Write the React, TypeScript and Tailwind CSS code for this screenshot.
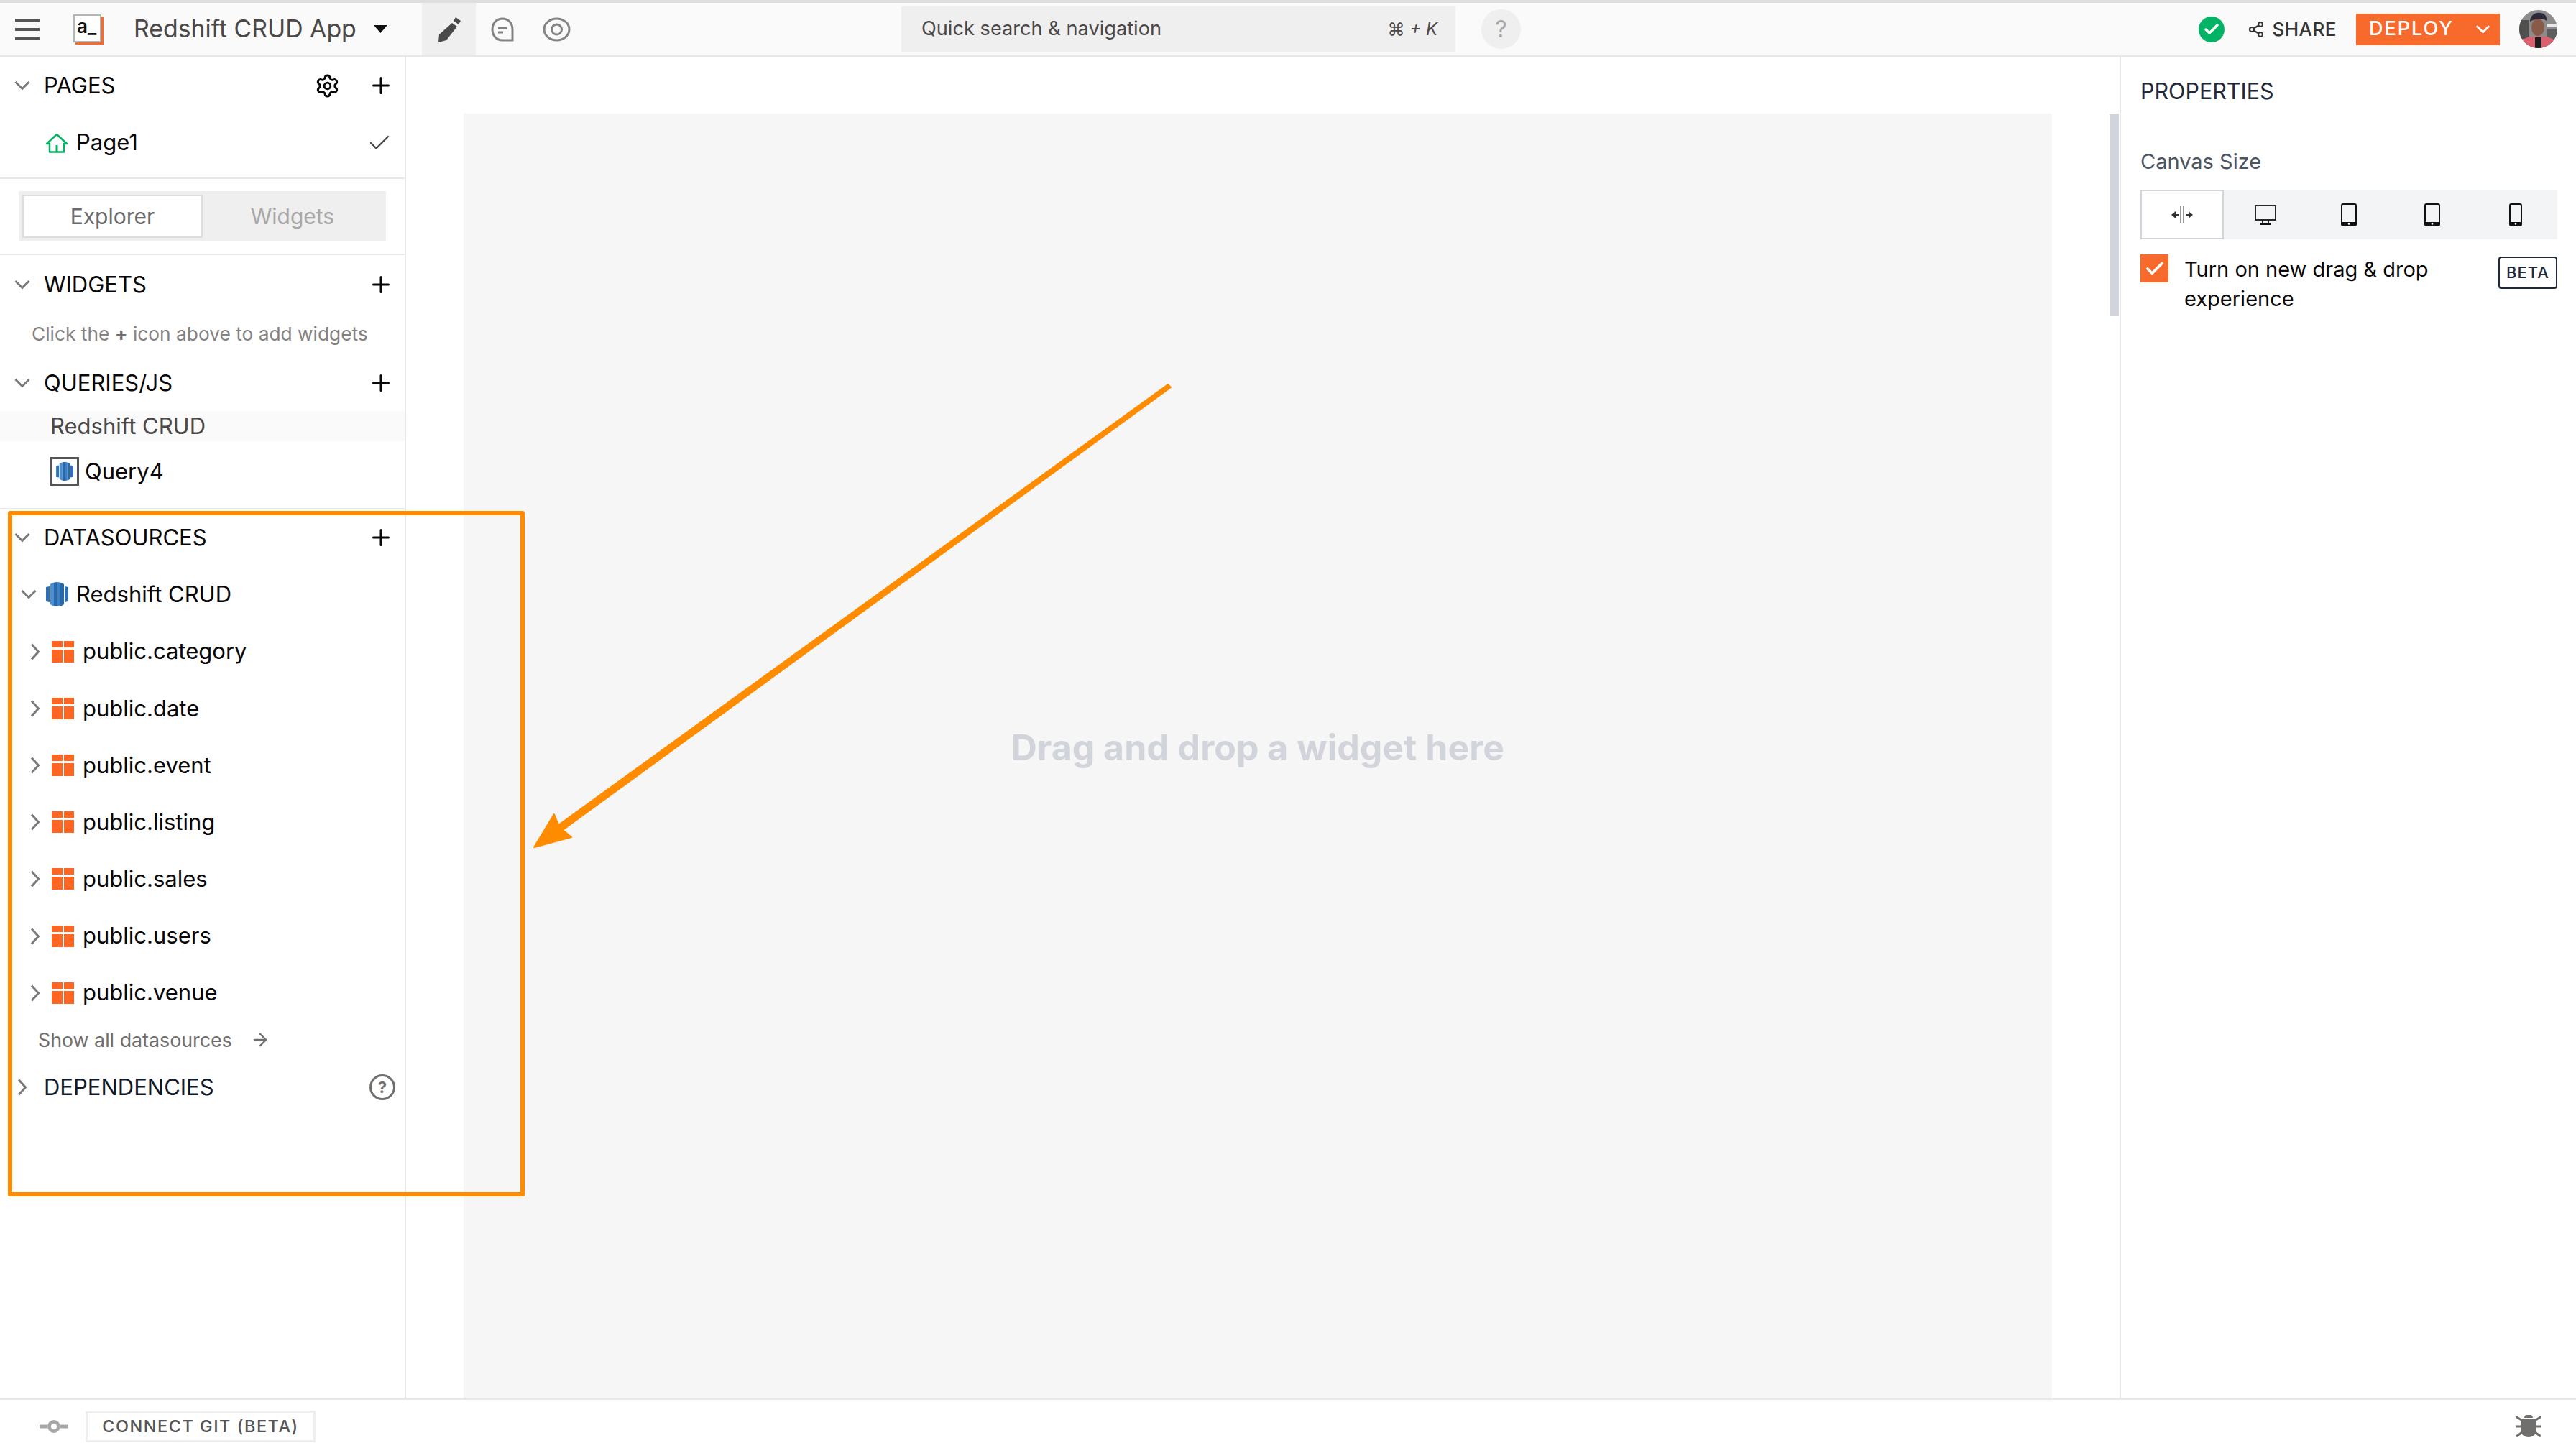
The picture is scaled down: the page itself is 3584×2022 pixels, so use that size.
import React from "react";
import { Check, Plus, Settings, ArrowRight, Share2 } from "lucide-react";

const tables = ["public.category", "public.date", "public.event", "public.listing", "public.sales", "public.users", "public.venue"];

function ChevronDown({ className }: { className?: string }) {
  return (
    <svg viewBox="0 0 22 14" className={className} fill="none" stroke="#7b7979" strokeWidth="3">
      <path d="M1.5 2 11 11.500 20.500 2" />
    </svg>
  );
}

function ChevronRight({ className }: { className?: string }) {
  return (
    <svg viewBox="0 0 14 24" className={className} fill="none" stroke="#7b7979" strokeWidth="3">
      <path d="M2 1.500 11.500 12 2 22.500" />
    </svg>
  );
}

function RedshiftIcon({ className }: { className?: string }) {
  return (
    <svg viewBox="0 0 31 34" className={className}>
      <path d="M0 7l5-1v22l-5-1z" fill="#2f6fb5" />
      <path d="M31 7l-5-1v22l5-1z" fill="#2f6fb5" />
      <path d="M6 3c1.500-1 3-2 5-2.300V33.300c-2-.3-3.500-1.300-5-2.300z" fill="#4a8fd0" />
      <path d="M11 .7C12.500.2 14 0 15.500 0v34c-1.500 0-3-.2-4.500-.7z" fill="#2a68ad" />
      <path d="M15.500 0C17 0 18.500.2 20 .7V33.300c-1.500.5-3 .7-4.500.7z" fill="#3d80c4" />
      <path d="M20 .7c2 .3 3.500 1.300 5 2.300V31c-1.500 1-3 2-5 2.300z" fill="#2a68ad" />
    </svg>
  );
}

function TableIcon() {
  return (
    <div className="grid grid-cols-2 grid-rows-[9px_18px] gap-x-[2px] gap-y-[3px] w-[31px] h-[30px] shrink-0">
      <div className="bg-[#ff6522]" />
      <div className="bg-[#ff6522]" />
      <div className="bg-[#ff6522]" />
      <div className="bg-[#ff6522]" />
    </div>
  );
}

function SectionRow({ title, className = "h-[78px]" }: { title: string; className?: string }) {
  return (
    <div className={`flex items-center shrink-0 ${className}`}>
      <div className="w-[61px] shrink-0 pl-[20px]">
        <ChevronDown className="w-[22px] h-[14px]" />
      </div>
      <span className="text-[31px] text-[#090707] flex-1">{title}</span>
      <Plus className="w-[36px] h-[36px] mr-[15px] text-[#090707]" strokeWidth={2} />
    </div>
  );
}

function Header() {
  return (
    <header className="h-[79px] shrink-0 flex items-stretch bg-[#fafafa] border-t-[4px] border-t-[#dedede] border-b-[2px] border-b-[#e8e8e8]">
      <div className="w-[587px] flex items-center shrink-0">
        <svg viewBox="0 0 34 30" className="w-[34px] h-[30px] ml-[21px]" fill="#555">
          <rect width="34" height="4" />
          <rect y="13" width="34" height="4" />
          <rect y="26" width="34" height="4" />
        </svg>
        <div className="w-[39px] h-[39px] ml-[47px] mb-[3px] bg-white border-[2px] border-[#b5b5b5] shadow-[3px_3px_0_#f86a2b] text-[26px] font-semibold leading-[30px] pl-[3px] text-[#111] overflow-hidden">a_</div>
        <span className="ml-[45px] text-[33.800px] text-[#4b4848]">Redshift CRUD App</span>
        <svg viewBox="0 0 19 11" className="w-[19px] h-[11px] ml-[24px]" fill="#111">
          <path d="M0 0h19L9.500 11z" />
        </svg>
      </div>
      <div className="w-[75px] bg-[#efefef] flex items-center justify-center shrink-0">
        <svg viewBox="0 0 36 36" className="w-[36px] h-[36px]" fill="#4b4848">
          <path d="M27 1l7 5-3 5-7-5zM22 9l7 5-15 19-11 3 1-11z" />
        </svg>
      </div>
      <div className="ml-[21px] flex items-center shrink-0">
        <svg viewBox="0 0 32 34" className="w-[32px] h-[34px]" fill="none" stroke="#858282" strokeWidth="3">
          <path d="M30 32H16C8 32 2 26 2 17S8 2 16 2s14 6 14 15z" />
          <path d="M10 15h12M10 21h7" />
        </svg>
      </div>
      <div className="ml-[40px] flex items-center shrink-0">
        <svg viewBox="0 0 39 34" className="w-[39px] h-[34px]" fill="none" stroke="#858282" strokeWidth="3">
          <ellipse cx="19.500" cy="17" rx="17.500" ry="15" />
          <circle cx="19.500" cy="17" r="7" />
        </svg>
      </div>
      <div className="ml-[460px] my-[5px] w-[771px] bg-[#efefef] flex items-center justify-between pl-[28px] pr-[25px] shrink-0">
        <span className="text-[27.200px] text-[#4b4848]">Quick search &amp; navigation</span>
        <span className="text-[24px] text-[#4b4848]">
          ⌘ <span className="italic">+ K</span>
        </span>
      </div>
      <div className="ml-[36px] flex items-center shrink-0">
        <div className="w-[55px] h-[55px] rounded-full bg-[#efefef] flex items-center justify-center text-[32px] text-[#a9a7a7]">?</div>
      </div>
      <div className="flex-1 flex items-center justify-end pr-[26px]">
        <div className="w-[36px] h-[36px] rounded-full bg-[#03b365] flex items-center justify-center">
          <Check className="w-[24px] h-[24px] text-white" strokeWidth={3.5} />
        </div>
        <Share2 className="ml-[32px] w-[24px] h-[24px] text-[#333]" strokeWidth={2.2} />
        <span className="ml-[10px] text-[26px] font-medium tracking-[0.5px] text-[#333]">SHARE</span>
        <div className="ml-[27px] w-[200px] h-[44px] bg-[#f86a2b] flex items-center pl-[18px] text-white">
          <span className="text-[27px] font-medium tracking-[2px]">DEPLOY</span>
          <svg viewBox="0 0 22 13" className="w-[21px] h-[13px] ml-auto mr-[13px]" fill="none" stroke="#fff" strokeWidth="3">
            <path d="M2 2l9 9 9-9" />
          </svg>
        </div>
        <svg viewBox="0 0 53 53" className="ml-[27px] w-[53px] h-[53px]">
          <defs>
            <clipPath id="avatarClip">
              <circle cx="26.500" cy="26.500" r="26.500" />
            </clipPath>
          </defs>
          <g clipPath="url(#avatarClip)">
            <rect width="53" height="53" fill="#8c8c8c" />
            <rect x="0" y="14" width="14" height="26" fill="#50504f" />
            <rect x="39" y="20" width="14" height="4" fill="#e8e8e8" />
            <rect x="39" y="27" width="14" height="14" fill="#5d5d5d" />
            <path d="M0 53V43l14-6h25l14 6v10z" fill="#d8606f" />
            <ellipse cx="26" cy="24" rx="9" ry="12" fill="#8a5a48" />
            <path d="M15 16c0-9 8-13 14-12 6 0 10 4 9 11-5-4-14-4-23 1z" fill="#2c2a3a" />
            <rect x="22" y="38" width="9" height="15" fill="#1d1b1d" />
          </g>
        </svg>
      </div>
    </header>
  );
}

function Sidebar() {
  return (
    <aside className="w-[565px] shrink-0 border-r-[2px] border-[#e8e8e8] flex flex-col">
      <div className="h-[170px] shrink-0 border-b-[2px] border-[#e8e8e8]">
        <div className="flex items-center h-[80px]">
          <div className="w-[61px] pl-[20px]">
            <ChevronDown className="w-[22px] h-[14px]" />
          </div>
          <span className="text-[31px] text-[#090707] flex-1">PAGES</span>
          <Settings className="w-[35px] h-[35px] text-[#090707] mr-[39px]" strokeWidth={2} />
          <Plus className="w-[36px] h-[36px] mr-[15px] text-[#090707]" strokeWidth={2} />
        </div>
        <div className="flex items-center h-[79px] pl-[64px]">
          <svg viewBox="0 0 30 28" className="w-[30px] h-[28px]" fill="none" stroke="#03b365" strokeWidth="2.500" strokeLinejoin="round">
            <path d="M15 2 29 15H25V26.500H5V15H1Z" />
            <path d="M15 17V26" strokeWidth="3" />
          </svg>
          <span className="ml-[12px] text-[31px] text-[#090707] flex-1">Page1</span>
          <Check className="w-[36px] h-[36px] mr-[17px] text-[#4b4848]" strokeWidth={1.6} />
        </div>
      </div>
      <div className="h-[106px] shrink-0 border-b-[2px] border-[#e8e8e8] pt-[17px] px-[26px]">
        <div className="w-[511px] h-[70px] bg-[#efefef] p-[5px] flex">
          <div className="w-[251px] bg-white border-[2px] border-[#dedede] flex items-center justify-center text-[30px] text-[#6b6b6b]">Explorer</div>
          <div className="flex-1 flex items-center justify-center text-[30px] text-[#a9a7a7]">Widgets</div>
        </div>
      </div>
      <SectionRow title="WIDGETS" className="h-[78px] mt-[2px]" />
      <div className="h-[59px] shrink-0 pl-[44px] flex items-center text-[26.300px] text-[#858282]">
        Click the&nbsp;<span className="font-bold text-[#716e6e]">+</span>&nbsp;icon above to add widgets
      </div>
      <SectionRow title="QUERIES/JS" />
      <div className="h-[42px] bg-[#fafafa] shrink-0 pl-[70px] flex items-center text-[31px] text-[#4b4848]">Redshift CRUD</div>
      <div className="h-[93px] shrink-0 pl-[70px] pb-[9px] flex items-center">
        <div className="w-[40px] h-[40px] border-[3px] border-[#555] flex items-center justify-center">
          <RedshiftIcon className="w-[24px] h-[26px]" />
        </div>
        <span className="ml-[8px] text-[31px] text-[#090707]">Query4</span>
      </div>
      <div className="shrink-0 border-t-[2px] border-[#e8e8e8]" />
      <SectionRow title="DATASOURCES" />
      <div className="h-[80px] shrink-0 flex items-center pl-[29px]">
        <ChevronDown className="w-[22px] h-[14px]" />
        <RedshiftIcon className="ml-[13px] w-[31px] h-[34px]" />
        <span className="ml-[11px] text-[31px] text-[#090707]">Redshift CRUD</span>
      </div>
      {tables.map((t) => (
        <div key={t} className="h-[79.2px] shrink-0 flex items-center pl-[42px]">
          <ChevronRight className="w-[14px] h-[24px]" />
          <div className="ml-[16px]">
            <TableIcon />
          </div>
          <span className="ml-[12px] text-[31px] text-[#090707]">{t}</span>
        </div>
      ))}
      <div className="h-[52px] shrink-0 flex items-center pl-[53px] text-[26.800px] text-[#716e6e]">
        Show all datasources
        <ArrowRight className="ml-[25px] w-[28px] h-[28px]" strokeWidth={2} />
      </div>
      <div className="h-[80px] shrink-0 flex items-center">
        <div className="w-[61px] pl-[24px]">
          <ChevronRight className="w-[14px] h-[24px]" />
        </div>
        <span className="text-[31px] text-[#101828] flex-1">DEPENDENCIES</span>
        <div className="w-[36px] h-[36px] mr-[13px] rounded-full border-[3px] border-[#716e6e] flex items-center justify-center text-[22px] font-bold text-[#716e6e]">?</div>
      </div>
    </aside>
  );
}

function PropertiesPanel() {
  return (
    <aside className="flex-1 border-l-[2px] border-[#e8e8e8] pl-[27px] pr-[26px] pt-[30px]">
      <h2 className="text-[30.500px] leading-[36px] text-[#1f2937]">PROPERTIES</h2>
      <p className="mt-[60px] text-[29px] leading-[40px] text-[#4b5563]">Canvas Size</p>
      <div className="mt-[19px] h-[69px] bg-[#f3f4f6] grid grid-cols-5">
        <div className="bg-white border-[2px] border-[#d1d5db] flex items-center justify-center">
          <svg viewBox="0 0 30 24" className="w-[30px] h-[24px]">
            <path d="M0 12l6-5v10zM30 12l-6-5v10z" fill="#333" />
            <path d="M5 12h5M20 12h5" stroke="#333" strokeWidth="2" />
            <path d="M13 0v24M17 0v24" stroke="#777" strokeWidth="1.500" />
          </svg>
        </div>
        <div className="flex items-center justify-center">
          <svg viewBox="0 0 30 28" className="w-[30px] h-[28px]" fill="none" stroke="#111" strokeWidth="1.800">
            <rect x="1" y="1" width="28" height="20" />
            <path d="M11 21v5M19 21v5M7 27h16" />
          </svg>
        </div>
        {[22, 22, 18].map((w, i) => (
          <div key={i} className="flex items-center justify-center">
            <svg viewBox={`0 0 ${w} 32`} style={{ width: w, height: 32 }} fill="none">
              <rect x="1" y="1" width={w - 2} height="30" rx="2" stroke="#111" strokeWidth="2" />
              <rect x="1" y="26" width={w - 2} height="5" fill="#111" />
              <circle cx={w / 2} cy="28.500" r="1.300" fill="#fff" />
            </svg>
          </div>
        ))}
      </div>
      <div className="mt-[21px] flex items-start">
        <div className="w-[39px] h-[39px] bg-[#f86a2b] flex items-center justify-center shrink-0">
          <Check className="w-[30px] h-[30px] text-white" strokeWidth={3} />
        </div>
        <p className="ml-[22px] w-[400px] text-[29px] leading-[41px] text-[#090707]">Turn on new drag &amp; drop experience</p>
        <div className="ml-auto mt-[3px] w-[82px] h-[45px] border-[2px] border-[#1f2937] rounded-[4px] flex items-center justify-center text-[22px] font-medium tracking-[1px] text-[#1f2937] shrink-0">BETA</div>
      </div>
    </aside>
  );
}

function Footer() {
  return (
    <footer className="h-[76px] shrink-0 border-t-[2px] border-[#e8e8e8] flex items-center">
      <svg viewBox="0 0 40 18" className="ml-[55px] w-[40px] h-[18px]" fill="none" stroke="#a9a7a7" strokeWidth="5">
        <path d="M0 9h11M29 9h11" />
        <circle cx="20" cy="9" r="6.500" />
      </svg>
      <div className="ml-[24px] w-[320px] h-[44px] border-[3px] border-[#eeeeee] flex items-center justify-center text-[23.500px] font-medium tracking-[1.500px] text-[#555]">CONNECT GIT (BETA)</div>
      <svg viewBox="0 0 36 32" className="ml-auto mr-[48px] w-[36px] h-[32px]" fill="#716e6e">
        <path d="M12 4a6 5 0 0 1 12 0z" />
        <path d="M7 6h22v14c0 7-5 11-11 11S7 27 7 20z" />
        <path d="M0 2l8 5M36 2l-8 5M0 16h8M36 16h-8M1 30l8-6M35 30l-8-6" stroke="#716e6e" strokeWidth="3" />
      </svg>
    </footer>
  );
}

export default function App() {
  return (
    <div className="relative w-[3584px] h-[2022px] overflow-hidden bg-white flex flex-col font-['Inter',sans-serif]">
      <Header />
      <div className="flex-1 flex min-h-0">
        <Sidebar />
        <main className="w-[2384px] shrink-0 flex">
          <div className="ml-[80px] mt-[79px] w-[2210px] bg-[#f6f6f6] flex justify-center pt-[850px]">
            <span className="text-[50px] font-bold leading-[64px] h-[64px] text-[#d1d5db]">Drag and drop a widget here</span>
          </div>
          <div className="ml-[80px] mt-[79px] w-[13px] h-[282px] bg-[#d1d5db]" />
        </main>
        <PropertiesPanel />
      </div>
      <Footer />
      {/* annotation drawn over the screenshot */}
      <div className="absolute left-[11px] top-[711px] w-[719px] h-[954px] border-[6px] border-[#ff8c00] rounded-[3px]" />
      <svg className="absolute left-0 top-0 w-[3584px] h-[2022px] pointer-events-none" viewBox="0 0 3584 2022">
        <path d="M1625 535 1629 539 783 1155 795 1165 743 1179 771 1133 777 1148Z" fill="#ff8c00" stroke="#ff8c00" strokeWidth="2" strokeLinejoin="round" />
      </svg>
    </div>
  );
}
